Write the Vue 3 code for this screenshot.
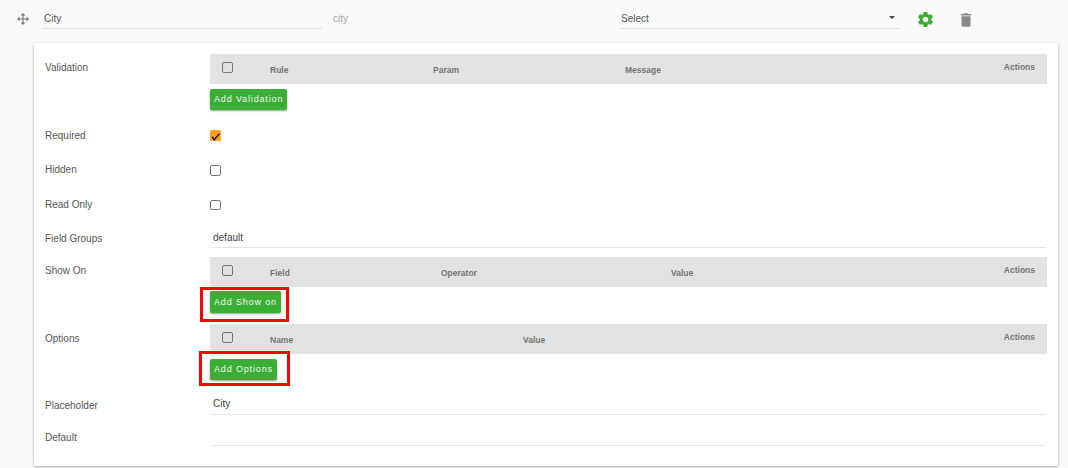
<script setup>
const cols = {
  validation: [['Rule', 60], ['Param', 223], ['Message', 415]],
  showOn: [['Field', 60], ['Operator', 231], ['Value', 461]],
  options: [['Name', 60], ['Value', 313]]
}
</script>

<template>
  <div class="page">
    <div class="top">
      <svg class="move" viewBox="0 0 24 24" width="14" height="14"><path fill="#757575" d="M13,6V11H18V7.75L22.25,12L18,16.25V13H13V18H16.25L12,22.25L7.75,18H11V13H6V16.25L1.75,12L6,7.75V11H11V6H7.75L12,1.75L16.25,6H13Z"/></svg>
      <div class="field name">City</div>
      <div class="slug">city</div>
      <div class="field select">Select<span class="caret"></span></div>
      <svg class="gear" viewBox="0 0 24 24" width="19" height="19"><path fill="#3bae36" d="M19.14 12.94c.04-.3.06-.61.06-.94 0-.32-.02-.64-.07-.94l2.03-1.58a.49.49 0 0 0 .12-.61l-1.92-3.32a.488.488 0 0 0-.59-.22l-2.39.96c-.5-.38-1.03-.7-1.62-.94l-.36-2.54a.484.484 0 0 0-.48-.41h-3.84c-.24 0-.43.17-.47.41l-.36 2.54c-.59.24-1.13.57-1.62.94l-2.39-.96c-.22-.08-.47 0-.59.22L2.74 8.87c-.12.21-.08.47.12.61l2.03 1.58c-.05.3-.09.63-.09.94s.02.64.07.94l-2.03 1.58a.49.49 0 0 0-.12.61l1.92 3.32c.12.22.37.29.59.22l2.39-.96c.5.38 1.03.7 1.62.94l.36 2.54c.05.24.24.41.48.41h3.84c.24 0 .44-.17.47-.41l.36-2.54c.59-.24 1.13-.56 1.62-.94l2.39.96c.22.08.47 0 .59-.22l1.92-3.32c.12-.22.07-.47-.12-.61l-2.01-1.58zM12 15.6c-1.98 0-3.6-1.62-3.6-3.6s1.62-3.6 3.6-3.6 3.6 1.62 3.6 3.6-1.62 3.6-3.6 3.6z"/></svg>
      <svg class="trash" viewBox="0 0 24 24" width="18" height="18"><path fill="#8a8a8a" d="M6 19c0 1.1.9 2 2 2h8c1.1 0 2-.9 2-2V7H6v12zM19 4h-3.5l-1-1h-5l-1 1H5v2h14V4z"/></svg>
    </div>

    <div class="card">
      <div class="row r-validation">
        <div class="label">Validation</div>
        <div class="control">
          <div class="thead">
            <span class="box head-box"></span>
            <span v-for="c in cols.validation" :key="c[0]" class="th" :style="{ left: c[1] + 'px' }">{{ c[0] }}</span>
            <span class="actions">Actions</span>
          </div>
          <button class="add first">Add Validation</button>
        </div>
      </div>

      <div class="row r-check r-required">
        <div class="label">Required</div>
        <div class="control">
          <span class="box checked">
            <svg viewBox="0 0 12 12" width="11" height="11"><path fill="none" stroke="#111" stroke-width="1.5" d="M2.2 7.4 4.6 10.6 10.4 4"/></svg>
          </span>
        </div>
      </div>
      <div class="row r-check">
        <div class="label">Hidden</div>
        <div class="control"><span class="box"></span></div>
      </div>
      <div class="row r-check r-readonly">
        <div class="label">Read Only</div>
        <div class="control"><span class="box small"></span></div>
      </div>

      <div class="row r-groups">
        <div class="label">Field Groups</div>
        <div class="control"><div class="input">default</div></div>
      </div>

      <div class="row r-show">
        <div class="label">Show On</div>
        <div class="control">
          <div class="thead">
            <span class="box head-box"></span>
            <span v-for="c in cols.showOn" :key="c[0]" class="th" :style="{ left: c[1] + 'px' }">{{ c[0] }}</span>
            <span class="actions">Actions</span>
          </div>
          <div class="btn-wrap wrap-show">
            <button class="add tall">Add Show on</button>
            <span class="mark mark-show"></span>
          </div>
        </div>
      </div>

      <div class="row r-options">
        <div class="label">Options</div>
        <div class="control">
          <div class="thead">
            <span class="box head-box"></span>
            <span v-for="c in cols.options" :key="c[0]" class="th" :style="{ left: c[1] + 'px' }">{{ c[0] }}</span>
            <span class="actions">Actions</span>
          </div>
          <div class="btn-wrap">
            <button class="add">Add Options</button>
            <span class="mark mark-options"></span>
          </div>
        </div>
      </div>

      <div class="row r-placeholder">
        <div class="label">Placeholder</div>
        <div class="control"><div class="input">City</div></div>
      </div>
      <div class="row r-default">
        <div class="label">Default</div>
        <div class="control"><div class="input empty"></div></div>
      </div>
    </div>
  </div>
</template>

<style scoped>
.page {
  width: 1068px;
  height: 468px;
  background: #fafafa;
  font-family: "Liberation Sans", Arial, sans-serif;
  font-size: 10px;
  color: #555;
  overflow: hidden;
  box-sizing: border-box;
}
.top {
  display: flex;
  align-items: flex-start;
  height: 43px;
  padding-left: 16px;
  box-sizing: border-box;
}
.move { margin-top: 12px; }
.field {
  height: 29px;
  box-sizing: border-box;
  border-bottom: 1px solid #dedede;
  padding-top: 13px;
  line-height: 12px;
}
.name { width: 280px; margin-left: 12px; padding-left: 2px; }
.slug { width: 287px; margin-left: 11px; padding-top: 13px; line-height: 12px; color: #a8a8a8; }
.select { width: 280px; padding-left: 1px; position: relative; }
.caret {
  position: absolute;
  right: 5px;
  top: 16px;
  border-left: 3px solid transparent;
  border-right: 3px solid transparent;
  border-top: 3px solid #444;
}
.gear { margin: 10px 0 0 16px; }
.trash { margin: 11px 0 0 22px; }

.card {
  margin-left: 34px;
  width: 1024px;
  height: 423px;
  box-sizing: border-box;
  background: #fff;
  border-radius: 2px;
  box-shadow: 0 1px 3px rgba(0, 0, 0, .35);
  padding: 11px 11px 0;
  display: flex;
  flex-direction: column;
}
.row { display: flex; align-items: flex-start; }
.label { width: 165px; flex: none; line-height: 12px; box-sizing: content-box; }
.control { flex: 1; min-width: 0; }

.r-validation { height: 71px; }
.r-validation .label { padding-top: 8px; }
.r-check { height: 35px; }
.r-check .label { padding-top: 4px; }
.r-check .control { padding-top: 5px; }
.r-required .label { padding-top: 5px; }
.r-readonly { height: 33px; }
.r-groups { height: 29px; }
.r-groups .label { padding-top: 5px; }
.r-show { height: 67px; }
.r-show .label { padding-top: 8px; }
.r-options { height: 67px; }
.r-options .label { padding-top: 9px; }
.r-placeholder { height: 33px; }
.r-placeholder .label { padding-top: 9px; }
.r-default .label { padding-top: 8px; }

.thead {
  position: relative;
  height: 30px;
  background: #e2e2e2;
  font-size: 8.5px;
  font-weight: 700;
  color: #757575;
}
.box {
  display: block;
  width: 11px;
  height: 11px;
  box-sizing: border-box;
  border: 1px solid #757575;
  border-radius: 2px;
  background: #fff;
}
.box.small { height: 10px; }
.head-box {
  position: absolute;
  left: 12px;
  top: 8px;
  background: transparent;
}
.checked {
  background: #ff9f1c;
  border: none;
  overflow: hidden;
}
.checked svg { display: block; }
.th { position: absolute; top: 10px; line-height: 12px; }
.actions { position: absolute; right: 12px; top: 7px; line-height: 12px; }

.add {
  display: block;
  height: 21px;
  padding: 0 4px 1px;
  border: none;
  border-radius: 2px;
  background: #3bae36;
  color: #f4f4f4;
  font: 400 9px "Liberation Sans", Arial, sans-serif;
  letter-spacing: .85px;
  box-shadow: 0 1px 2px rgba(0, 0, 0, .4);
  white-space: nowrap;
}
.tall { height: 22px; }
.first { margin-top: 5px; }
.btn-wrap { position: relative; display: inline-block; margin-top: 5px; }
.wrap-show { margin-top: 4px; }
.mark {
  position: absolute;
  border: 3px solid #f00;
  box-sizing: border-box;
  pointer-events: none;
}
.mark-show { left: -10px; right: -8px; top: -4px; bottom: -9px; }
.mark-options { left: -11px; right: -13px; top: -8px; bottom: -6px; }

.input {
  margin: 0 1px;
  padding: 0 0 0 2px;
  box-sizing: border-box;
  border-bottom: 1px solid #e4e4e4;
  line-height: 12px;
  color: #444;
}
.r-groups .input { margin-top: 4px; height: 16px; }
.r-placeholder .input { margin-top: 7px; height: 17px; }
.r-default .input { height: 22px; }
</style>

<style>
html, body { margin: 0; background: #fafafa; }
</style>
